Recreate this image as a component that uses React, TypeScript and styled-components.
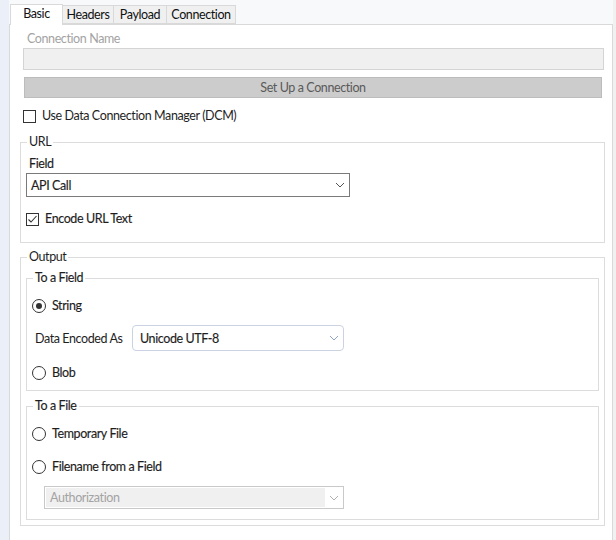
import styled, { createGlobalStyle } from "styled-components";

const GlobalStyle = createGlobalStyle`
  html, body {
    margin: 0;
    padding: 0;
    background: #ffffff;
  }
  body {
    font-family: Lato, "Noto Sans", sans-serif;
    font-size: 12.5px;
    letter-spacing: -0.4px;
    color: #1e1e1e;
  }
`;

const Page = styled.div`
  display: flex;
  width: 616px;
  height: 540px;
  overflow: hidden;
`;

const LeftRail = styled.div`
  width: 9px;
  background: #eaeff8;
`;

const RightRail = styled.div`
  width: 3px;
  background: #f1f1f1;
`;

const Main = styled.div`
  width: 604px;
  display: flex;
  flex-direction: column;
  background: #f8f9fb;
`;

const TabBar = styled.div`
  height: 24px;
  display: flex;
  align-items: flex-end;
  padding-left: 1px;
`;

const Tab = styled.div<{ $active?: boolean; $w: number }>`
  box-sizing: border-box;
  width: ${(p) => p.$w}px;
  height: ${(p) => (p.$active ? 21 : 19)}px;
  margin-bottom: ${(p) => (p.$active ? -1 : 0)}px;
  margin-left: ${(p) => (p.$active ? 0 : -1)}px;
  border: 1px solid #d9d9d9;
  border-bottom: ${(p) => (p.$active ? "none" : "1px solid #d9d9d9")};
  background: ${(p) => (p.$active ? "#ffffff" : "#f0f0f0")};
  display: flex;
  align-items: center;
  justify-content: center;
  padding-bottom: ${(p) => (p.$active ? 3 : 0)}px;
  position: relative;
  z-index: ${(p) => (p.$active ? 2 : 1)};
  color: #111;
  &:first-child {
    margin-left: 0;
  }
`;

const Panel = styled.div`
  flex: 1;
  background: #ffffff;
  border: 1px solid #d9d9d9;
  border-bottom: none;
  padding: 0 7px 0 10px;
`;

const Header = styled.div`
  display: flex;
  flex-direction: column;
  margin: 0 1px 0 3px;
`;

const FieldLabel = styled.div<{ $muted?: boolean; $bold?: boolean }>`
  line-height: 16px;
  height: 16px;
  padding-left: ${(p) => (p.$muted ? 4 : 3)}px;
  color: ${(p) => (p.$muted ? "#a3a3a3" : "#1e1e1e")};
  -webkit-text-stroke: ${(p) => (p.$bold ? "0.15px #1e1e1e" : "0")};
`;

const DisabledInput = styled.div`
  box-sizing: border-box;
  height: 22px;
  margin-top: 1px;
  background: #f0f0f0;
  border: 1px solid #d4d4d4;
`;

const SetupButton = styled.div`
  box-sizing: border-box;
  height: 21px;
  margin: 7px 2px 0 1px;
  background: #cccccc;
  border: 1px solid #bcbcbc;
  color: #5a5a5a;
  display: flex;
  align-items: center;
  justify-content: center;
`;

const CheckRow = styled.label<{ $top: number; $indent?: number }>`
  display: flex;
  align-items: center;
  gap: 6px;
  height: 16px;
  margin-top: ${(p) => p.$top}px;
  margin-left: ${(p) => p.$indent ?? 0}px;
  line-height: 16px;
`;

const RowText = styled.span<{ $bold?: boolean }>`
  color: #1e1e1e;
  -webkit-text-stroke: ${(p) => (p.$bold ? "0.15px #1e1e1e" : "0")};
`;

const Box = styled.span`
  box-sizing: border-box;
  width: 13px;
  height: 13px;
  border: 1px solid #333333;
  background: #ffffff;
  display: inline-flex;
  align-items: center;
  justify-content: center;
`;

const RadioRing = styled.span`
  box-sizing: border-box;
  width: 14px;
  height: 14px;
  border: 1px solid #333333;
  border-radius: 50%;
  background: #ffffff;
  display: inline-flex;
  align-items: center;
  justify-content: center;
`;

const RadioDot = styled.span`
  width: 6px;
  height: 6px;
  border-radius: 50%;
  background: #333333;
`;

const Group = styled.fieldset<{ $top: number; $pad: string; $inset?: number }>`
  margin: ${(p) => p.$top}px ${(p) => p.$inset ?? 0}px 0 ${(p) => p.$inset ?? 0}px;
  padding: ${(p) => p.$pad};
  border: 1px solid #dcdcdc;
  min-width: 0;
`;

const Legend = styled.legend<{ $bold?: boolean }>`
  padding: 0 2px;
  margin-left: 1px;
  line-height: 16px;
  height: 16px;
  color: #1e1e1e;
  -webkit-text-stroke: ${(p) => (p.$bold ? "0.15px #1e1e1e" : "0")};
`;

const Select = styled.div<{ $variant: "plain" | "rounded" | "disabled"; $w: number; $h: number; $top: number; $left?: number }>`
  box-sizing: border-box;
  width: ${(p) => p.$w}px;
  height: ${(p) => p.$h}px;
  margin-top: ${(p) => p.$top}px;
  margin-left: ${(p) => p.$left ?? 0}px;
  display: flex;
  align-items: center;
  background: #ffffff;
  border: 1px solid
    ${(p) => (p.$variant === "plain" ? "#7a7a7a" : p.$variant === "rounded" ? "#cbd3e3" : "#c9c9c9")};
  border-radius: ${(p) => (p.$variant === "rounded" ? 4 : 0)}px;
  color: ${(p) => (p.$variant === "disabled" ? "#a3a3a3" : "#1e1e1e")};
  padding: ${(p) => (p.$variant === "disabled" ? "1px 0 1px 1px" : "0 0 0 4px")};
`;

const SelectValue = styled.div<{ $disabled?: boolean; $rounded?: boolean }>`
  flex: 1;
  align-self: stretch;
  display: flex;
  align-items: center;
  padding-left: ${(p) => (p.$disabled ? 4 : p.$rounded ? 3 : 0)}px;
  background: ${(p) => (p.$disabled ? "#f0f0f0" : "transparent")};
  -webkit-text-stroke: ${(p) => (p.$disabled ? "0" : "0.15px #1e1e1e")};
`;

const Arrow = styled.div`
  width: 18px;
  display: flex;
  align-items: center;
  justify-content: center;
`;

const EncodedRow = styled.div`
  display: flex;
  align-items: center;
  margin-top: 11px;
  margin-left: 3px;
`;

const EncodedLabel = styled.span`
  width: 97px;
  color: #1e1e1e;
`;

const Chevron = ({ color }: { color: string }) => (
  <svg width="10" height="6" viewBox="0 0 10 6">
    <path d="M1 1 L5 5 L9 1" fill="none" stroke={color} strokeWidth="1" />
  </svg>
);

const CheckBox = ({ checked }: { checked?: boolean }) => (
  <Box>
    {checked && (
      <svg width="11" height="11" viewBox="0 0 11 11">
        <path d="M1.5 5.5 L4 8 L9.5 2" fill="none" stroke="#333" strokeWidth="1.1" />
      </svg>
    )}
  </Box>
);

const Radio = ({ checked }: { checked?: boolean }) => <RadioRing>{checked && <RadioDot />}</RadioRing>;

const tabs = [
  { label: "Basic", w: 53, active: true },
  { label: "Headers", w: 52 },
  { label: "Payload", w: 54 },
  { label: "Connection", w: 70 },
];

const App = () => {
  return (
    <>
      <GlobalStyle />
      <Page>
        <LeftRail />
        <Main>
          <TabBar>
            {tabs.map((t) => (
              <Tab key={t.label} $w={t.w} $active={t.active}>
                {t.label}
              </Tab>
            ))}
          </TabBar>
          <Panel>
            <Header>
              <FieldLabel $muted style={{ marginTop: 6 }}>
                Connection Name
              </FieldLabel>
              <DisabledInput />
              <SetupButton>Set Up a Connection</SetupButton>
              <CheckRow $top={10}>
                <CheckBox />
                <RowText>Use Data Connection Manager (DCM)</RowText>
              </CheckRow>
            </Header>

            <Group $top={10} $pad="0 5px 15px 5px">
              <Legend>URL</Legend>
              <FieldLabel $bold style={{ marginTop: 6 }}>
                Field
              </FieldLabel>
              <Select $variant="plain" $w={324} $h={24} $top={1}>
                <SelectValue>API Call</SelectValue>
                <Arrow>
                  <Chevron color="#555555" />
                </Arrow>
              </Select>
              <CheckRow $top={14}>
                <CheckBox checked />
                <RowText $bold>Encode URL Text</RowText>
              </CheckRow>
            </Group>

            <Group $top={6} $pad="0 5px 5px 5px">
              <Legend>Output</Legend>
              <Group $top={5} $pad="0 5px 9px 5px">
                <Legend $bold>To a Field</Legend>
                <CheckRow $top={12}>
                  <Radio checked />
                  <RowText $bold>String</RowText>
                </CheckRow>
                <EncodedRow>
                  <EncodedLabel>Data Encoded As</EncodedLabel>
                  <Select $variant="rounded" $w={212} $h={26} $top={0}>
                    <SelectValue $rounded>Unicode UTF-8</SelectValue>
                    <Arrow>
                      <Chevron color="#8fa3c8" />
                    </Arrow>
                  </Select>
                </EncodedRow>
                <CheckRow $top={14}>
                  <Radio />
                  <RowText $bold>Blob</RowText>
                </CheckRow>
              </Group>

              <Group $top={7} $pad="0 5px 10px 5px">
                <Legend $bold>To a File</Legend>
                <CheckRow $top={12}>
                  <Radio />
                  <RowText $bold>Temporary File</RowText>
                </CheckRow>
                <CheckRow $top={17}>
                  <Radio />
                  <RowText $bold>Filename from a Field</RowText>
                </CheckRow>
                <Select $variant="disabled" $w={300} $h={23} $top={11} $left={12}>
                  <SelectValue $disabled>Authorization</SelectValue>
                  <Arrow>
                    <Chevron color="#b0b0b0" />
                  </Arrow>
                </Select>
              </Group>
            </Group>
          </Panel>
        </Main>
        <RightRail />
      </Page>
    </>
  );
};

export default App;
